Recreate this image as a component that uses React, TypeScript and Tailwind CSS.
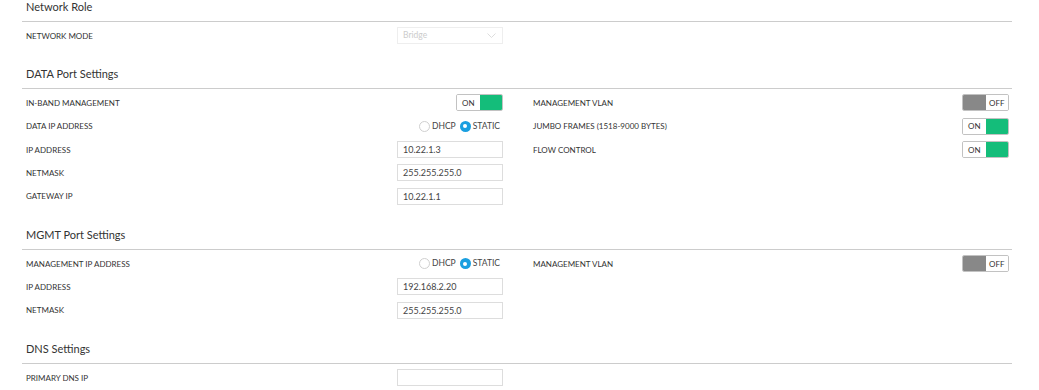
import React from "react";

const font = { fontFamily: "Lato, 'Open Sans', Arial, sans-serif" };

function Heading({ children, first }: { children: React.ReactNode; first?: boolean }) {
  return (
    <div
      className={`${first ? "" : "mt-[20px]"} border-b border-[#cccccc] pb-[7px] pl-[4px] text-[11px] leading-[14px] text-[#333333]`}
    >
      {children}
    </div>
  );
}

function Row({ label, children }: { label?: string; children?: React.ReactNode }) {
  return (
    <div className="flex h-[23.33px] items-center justify-between">
      <span className="text-[8px] uppercase text-[#333333]">{label}</span>
      {children}
    </div>
  );
}

function Input({ value }: { value: string }) {
  return (
    <div className="flex h-[17px] w-[106px] items-center border border-[#dddddd] bg-white pl-[5px] text-[9px] text-[#444444]">
      {value}
    </div>
  );
}

function Toggle({ on }: { on: boolean }) {
  return (
    <div className="flex h-[17px] w-[47px] overflow-hidden rounded-[2px] border border-[#c2c2c2]">
      {on ? (
        <>
          <div className="flex w-1/2 items-center justify-center bg-white text-[8px] text-[#333333]">ON</div>
          <div className="w-1/2 bg-[#14bd7a]"></div>
        </>
      ) : (
        <>
          <div className="w-1/2 bg-[#888888]"></div>
          <div className="flex w-1/2 items-center justify-center bg-white text-[8px] text-[#333333]">OFF</div>
        </>
      )}
    </div>
  );
}

function Radios() {
  return (
    <div className="mr-[3px] flex items-center text-[8.5px] text-[#444444]">
      <span className="h-[11px] w-[11px] rounded-full border border-[#d0d0d0] bg-white"></span>
      <span className="ml-[2px]">DHCP</span>
      <span className="ml-[4px] flex h-[11px] w-[11px] items-center justify-center rounded-full bg-[#1a9fe0]">
        <span className="h-[4px] w-[4px] rounded-full bg-white"></span>
      </span>
      <span className="ml-[2px]">STATIC</span>
    </div>
  );
}

function Select() {
  return (
    <div className="flex h-[17px] w-[106px] items-center justify-between border border-[#eeeeee] bg-white pl-[5px] pr-[6px] text-[8.5px] text-[#cccccc]">
      <span>Bridge</span>
      <svg width="9" height="6" viewBox="0 0 9 6" fill="none">
        <polyline points="0.5,0.5 4.5,4.5 8.5,0.5" stroke="#dddddd" strokeWidth="1" />
      </svg>
    </div>
  );
}

function Cols({ left, right }: { left: React.ReactNode; right?: React.ReactNode }) {
  return (
    <div className="grid grid-cols-[477px_476px] gap-x-[30px] pl-[4px] pt-[2px]">
      <div>{left}</div>
      <div>{right}</div>
    </div>
  );
}

export default function App() {
  return (
    <div className="min-h-[390px] w-full bg-white" style={font}>
      <div className="ml-[22px] w-[990px]">
        <Heading first>Network Role</Heading>
        <Cols
          left={
            <Row label="Network Mode">
              <Select />
            </Row>
          }
        />

        <Heading>DATA Port Settings</Heading>
        <Cols
          left={
            <>
              <Row label="In-Band Management">
                <Toggle on />
              </Row>
              <Row label="Data IP Address">
                <Radios />
              </Row>
              <Row label="IP Address">
                <Input value="10.22.1.3" />
              </Row>
              <Row label="Netmask">
                <Input value="255.255.255.0" />
              </Row>
              <Row label="Gateway IP">
                <Input value="10.22.1.1" />
              </Row>
            </>
          }
          right={
            <>
              <Row label="Management VLAN">
                <Toggle on={false} />
              </Row>
              <Row label="Jumbo Frames (1518-9000 Bytes)">
                <Toggle on />
              </Row>
              <Row label="Flow Control">
                <Toggle on />
              </Row>
            </>
          }
        />

        <Heading>MGMT Port Settings</Heading>
        <Cols
          left={
            <>
              <Row label="Management IP Address">
                <Radios />
              </Row>
              <Row label="IP Address">
                <Input value="192.168.2.20" />
              </Row>
              <Row label="Netmask">
                <Input value="255.255.255.0" />
              </Row>
            </>
          }
          right={
            <Row label="Management VLAN">
              <Toggle on={false} />
            </Row>
          }
        />

        <Heading>DNS Settings</Heading>
        <Cols
          left={
            <Row label="Primary DNS IP">
              <Input value="" />
            </Row>
          }
        />
      </div>
    </div>
  );
}
